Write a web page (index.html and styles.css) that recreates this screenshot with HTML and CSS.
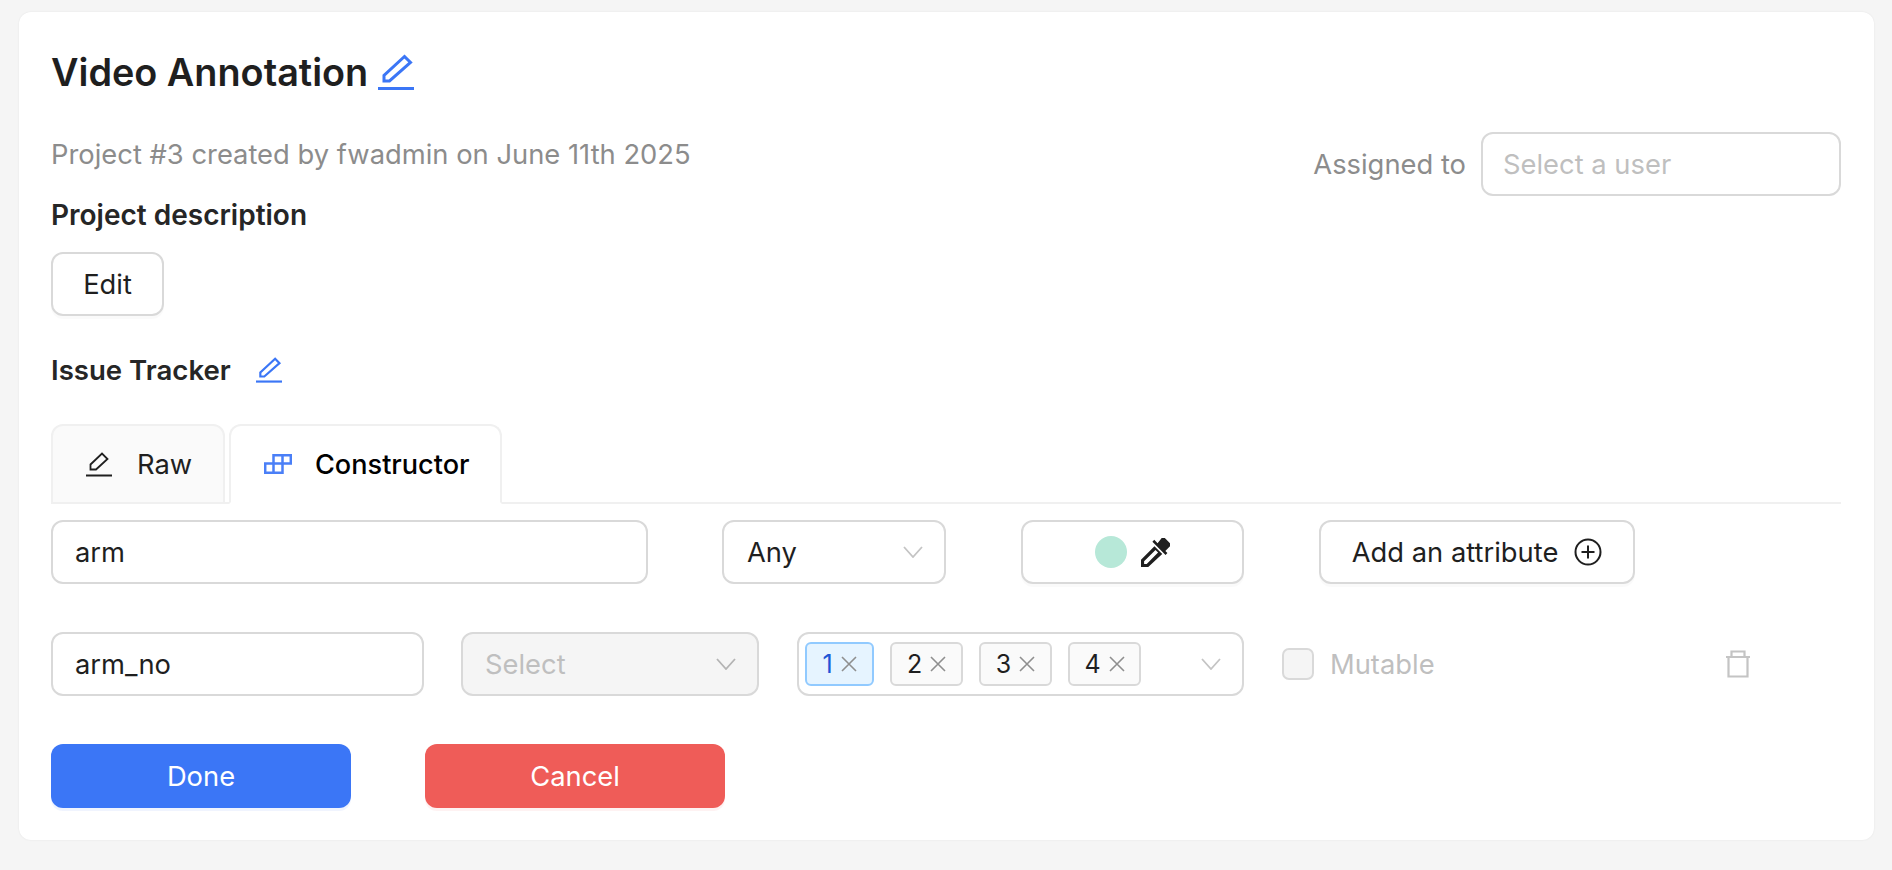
FILE: index.html
```html
<!DOCTYPE html>
<html lang="en">
<head>
<meta charset="utf-8">
<title>Video Annotation</title>
<link rel="stylesheet" href="styles.css">
</head>
<body>
<main class="card">
  <h1 class="title">Video Annotation
    <svg class="icon-title" viewBox="0 0 36 36" fill="none" stroke="#3b76f6" stroke-width="3"><path d="M6 27V21.500L26.500 2.500 32.500 8.500 11.500 27Z"/><path d="M0 34.500h36" stroke-width="3"/></svg>
  </h1>
  <div class="top-row">
    <p class="meta">Project #3 created by fwadmin on June 11th 2025</p>
    <div class="assign">
      <span class="assign-label">Assigned to</span>
      <input class="field assign-input" placeholder="Select a user">
    </div>
  </div>
  <h2 class="label desc-label">Project description</h2>
  <button class="btn edit-btn">Edit</button>
  <div class="issue">
    <h2 class="label">Issue Tracker</h2>
    <svg class="icon-issue" viewBox="0 0 36 36" fill="none" stroke="#3b76f6" stroke-width="3"><path d="M6 27V21.500L26.500 2.500 32.500 8.500 11.500 27Z"/><path d="M0 34h36" stroke-width="3"/></svg>
  </div>
  <div class="tabs">
    <div class="tab tab-raw">
      <svg class="icon-tab" viewBox="0 0 26 26" fill="none" stroke="#1f1f1f" stroke-width="1.8"><path d="M4.500 18.500v-5L16 2.500 21.500 8 10 18.500Z"/><path d="M0 24.500h26" stroke-width="2"/></svg>
      <span>Raw</span>
    </div>
    <div class="tab tab-active">
      <svg class="icon-tab" viewBox="0 0 28 20" fill="none" stroke="#4a7ff7" stroke-width="2.500"><path d="M1.200 9.500h17.300v9.300H1.200zM9.500 9.500v9.300M9.500 9.500V1.200h17.300v8.300H18.500M18.500 1.200v8.300"/></svg>
      <span>Constructor</span>
    </div>
  </div>
  <div class="row row-label">
    <input class="field name-input" value="arm">
    <div class="select select-any">
      <span>Any</span>
      <svg class="chevron" viewBox="0 0 20 12" fill="none" stroke="#c4c4c4" stroke-width="1.800"><path d="M1 1l9 10 9-10"/></svg>
    </div>
    <button class="btn color-btn">
      <span class="swatch"></span>
      <svg class="dropper" viewBox="0 0 28 28" fill="#1f1f1f"><path d="M23 0l5 5v3l-4.500 4.500 2 2-1.800 1.800L11 3.600 12.800 1.800l3.200 3.200 4-5z"/><path fill-rule="evenodd" d="M13 8l7.500 7.500L7 28H0v-7zM14 11.500L3 22.500V25h2.500l11-11z"/></svg>
    </button>
    <button class="btn add-btn">
      <span>Add an attribute</span>
      <svg class="plus" viewBox="0 0 28 28" fill="none" stroke="#1f1f1f" stroke-width="2"><circle cx="14" cy="14" r="12.500"/><path d="M14 7.500v13M7.500 14h13"/></svg>
    </button>
  </div>
  <div class="row row-attr">
    <input class="field attr-input" value="arm_no">
    <div class="select select-disabled">
      <span>Select</span>
      <svg class="chevron" viewBox="0 0 20 12" fill="none" stroke="#b4b4b4" stroke-width="1.800"><path d="M1 1l9 10 9-10"/></svg>
    </div>
    <div class="select multi">
      <span class="tag tag-on">1<svg class="x" viewBox="0 0 16 16"><path d="M1 1l14 14M15 1L1 15"/></svg></span>
      <span class="tag">2<svg class="x" viewBox="0 0 16 16"><path d="M1 1l14 14M15 1L1 15"/></svg></span>
      <span class="tag">3<svg class="x" viewBox="0 0 16 16"><path d="M1 1l14 14M15 1L1 15"/></svg></span>
      <span class="tag">4<svg class="x" viewBox="0 0 16 16"><path d="M1 1l14 14M15 1L1 15"/></svg></span>
      <svg class="chevron" viewBox="0 0 20 12" fill="none" stroke="#c4c4c4" stroke-width="1.800"><path d="M1 1l9 10 9-10"/></svg>
    </div>
    <label class="check"><span class="box"></span><span>Mutable</span></label>
    <svg class="trash" viewBox="0 0 24 28" fill="none" stroke="#c4c4c4" stroke-width="2.200"><path d="M0 7h24M5.500 7V1.500h13V7M2.500 7v19.500h19V7"/></svg>
  </div>
  <div class="actions">
    <button class="btn-solid done">Done</button>
    <button class="btn-solid cancel">Cancel</button>
  </div>
</main>
</body>
</html>
```
FILE: styles.css
```css
* { box-sizing: border-box; }
html, body { margin: 0; height: 100%; }
body {
  background: #f5f5f5;
  font-family: Inter, "Liberation Sans", sans-serif;
  font-size: 27.35px;
  color: #1f1f1f;
  overflow: hidden;
}
.card {
  margin: 12px 18px 0 19px;
  height: 828px;
  background: #fff;
  border-radius: 12px;
  box-shadow: 0 0 2px rgba(0,0,0,.08);
  padding: 36px 33px 0 32px;
}
.title {
  margin: 0;
  height: 48px;
  font-size: 37.8px;
  line-height: 48px;
  font-weight: 600;
  display: flex;
  align-items: center;
  gap: 10px;
}
.icon-title { width: 36px; height: 36px; }
.top-row {
  margin-top: 36px;
  display: flex;
  justify-content: space-between;
  height: 64px;
}
.meta { margin: 5px 0 0; line-height: 36px; color: #8c8c8c; height: 36px; }
.assign { display: flex; align-items: center; gap: 15px; }
.assign-label { color: #8c8c8c; }
.field {
  height: 64px;
  border: 2px solid #d9d9d9;
  border-radius: 12px;
  background: #fff;
  font: inherit;
  color: #1f1f1f;
  padding: 0 22px;
  outline: none;
}
.field::placeholder { color: #bfbfbf; opacity: 1; }
.assign-input { width: 360px; padding: 0 20px; }
.label { margin: 0; font-size: 27.6px; line-height: 36px; font-weight: 600; color: #262626; }
.desc-label { margin-top: 1px; font-size: 28px; }
.btn {
  height: 64px;
  border: 2px solid #d9d9d9;
  border-radius: 12px;
  background: #fff;
  font: inherit;
  color: #1f1f1f;
  box-shadow: 0 3px 0 rgba(0,0,0,.02);
  display: flex;
  align-items: center;
  justify-content: center;
  padding: 0;
}
.edit-btn { width: 113px; margin-top: 19px; }
.issue { margin-top: 36px; display: flex; align-items: center; gap: 25px; }
.icon-issue { width: 26px; height: 26px; }
.tabs {
  margin-top: 36px;
  height: 80px;
  display: flex;
  gap: 4px;
  border-bottom: 2px solid #f0f0f0;
}
.tab {
  height: 80px;
  border: 2px solid #f0f0f0;
  border-radius: 12px 12px 0 0;
  background: #fafafa;
  display: flex;
  align-items: center;
  padding: 0 28px 0 33px;
}
.tab-raw { width: 174px; gap: 25px; }
.tab-active {
  width: 273px;
  background: #fff;
  border-bottom-color: #fff;
  color: #000;
  font-weight: 500;
  font-size: 27.1px;
  gap: 23px;
}
.icon-tab { width: 26px; height: 26px; flex: none; }
.tab-active .icon-tab { width: 28px; height: 20px; }
.row { display: flex; align-items: center; }
.row-label { margin-top: 16px; }
.row-attr { margin-top: 48px; }
.name-input { width: 597px; }
.select {
  height: 64px;
  border: 2px solid #d9d9d9;
  border-radius: 12px;
  background: #fff;
  display: flex;
  align-items: center;
  justify-content: space-between;
  padding: 0 21px 0 22px;
  flex: none;
}
.chevron { width: 20px; height: 12px; flex: none; }
.select-any { width: 224px; margin-left: 74px; padding-left: 23px; }
.color-btn { width: 223px; margin-left: 75px; gap: 14px; }
.swatch { width: 32px; height: 32px; border-radius: 50%; background: #b7e8d8; }
.dropper { width: 29px; height: 29px; }
.add-btn { width: 316px; margin-left: 75px; gap: 16px; }
.plus { width: 28px; height: 28px; }
.attr-input { width: 373px; }
.select-disabled {
  width: 298px;
  margin-left: 37px;
  background: #f5f5f5;
  color: #bfbfbf;
}
.multi {
  width: 447px;
  margin-left: 38px;
  padding: 0 21px 0 6px;
  justify-content: flex-start;
  gap: 16px;
}
.multi .chevron { margin-left: auto; }
.tag {
  height: 44px;
  width: 73px;
  border: 2px solid #d9d9d9;
  border-radius: 6px;
  background: #fafafa;
  display: flex;
  align-items: center;
  justify-content: center;
  gap: 8px;
  font-size: 25px;
}
.tag-on { width: 69px; background: #e6f4ff; border-color: #91caff; color: #1d56d6; }
.x { width: 16px; height: 16px; stroke: #8f8f8f; stroke-width: 1.6; fill: none; }
.check { margin-left: 38px; display: flex; align-items: center; gap: 16px; color: #bfbfbf; }
.box {
  width: 32px;
  height: 32px;
  border: 2px solid #d9d9d9;
  border-radius: 7px;
  background: #f5f5f5;
}
.trash { width: 24px; height: 28px; margin-left: 291px; }
.actions { margin-top: 48px; display: flex; gap: 74px; }
.btn-solid {
  width: 300px;
  height: 64px;
  border: 0;
  border-radius: 12px;
  font: inherit;
  color: #fff;
}
.done { background: #3b76f6; box-shadow: 0 3px 0 rgba(59,118,246,.08); }
.cancel { background: #ef5c58; box-shadow: 0 3px 0 rgba(239,92,88,.08); }
```
